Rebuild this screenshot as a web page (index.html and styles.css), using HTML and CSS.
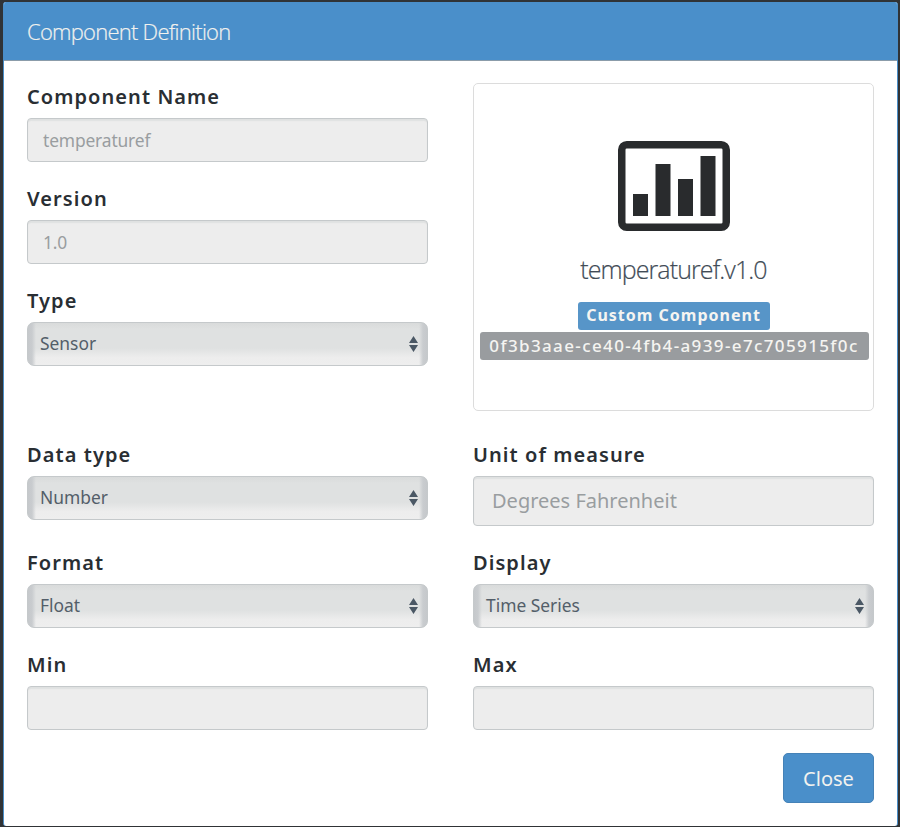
FILE: index.html
```html
<!DOCTYPE html>
<html lang="en">
<head>
<meta charset="utf-8">
<title>Component Definition</title>
<link rel="stylesheet" href="styles.css">
</head>
<body>
<main class="modal">
  <header class="modal-header"><h1 class="title">Component Definition</h1></header>
  <div class="modal-body">
    <section class="grid summary">
      <div>
        <div class="field"><div class="label">Component Name</div><div class="input"><span>temperaturef</span></div></div>
        <div class="field"><div class="label">Version</div><div class="input"><span>1.0</span></div></div>
        <div class="field"><div class="label">Type</div><div class="select"><span>Sensor</span><svg class="arrows" viewBox="0 0 9 16"><path d="M4.500 0L9 7H0zM0 9h9l-4.500 7z"/></svg></div></div>
      </div>
      <div class="card">
        <svg class="chart" viewBox="0 0 112 90"><rect x="3.750" y="3.750" width="104.500" height="82.500" rx="5" fill="none" stroke="#292b2d" stroke-width="7.500"/><path fill="#292b2d" d="M15 53h15v22H15zM37.500 23h15v52h-15zM60 38h15v37H60zM82.500 15h15v60h-15z"/></svg>
        <h2 class="name">temperaturef.v1.0</h2>
        <span class="badge badge-blue">Custom Component</span>
        <span class="badge badge-gray">0f3b3aae-ce40-4fb4-a939-e7c705915f0c</span>
      </div>
    </section>
    <section class="grid">
      <div class="field"><div class="label">Data type</div><div class="select"><span>Number</span><svg class="arrows" viewBox="0 0 9 16"><path d="M4.500 0L9 7H0zM0 9h9l-4.500 7z"/></svg></div></div>
      <div class="field"><div class="label">Unit of measure</div><div class="input input-large"><span>Degrees Fahrenheit</span></div></div>
      <div class="field"><div class="label">Format</div><div class="select"><span>Float</span><svg class="arrows" viewBox="0 0 9 16"><path d="M4.500 0L9 7H0zM0 9h9l-4.500 7z"/></svg></div></div>
      <div class="field"><div class="label">Display</div><div class="select"><span>Time Series</span><svg class="arrows" viewBox="0 0 9 16"><path d="M4.500 0L9 7H0zM0 9h9l-4.500 7z"/></svg></div></div>
      <div class="field"><div class="label">Min</div><div class="input"></div></div>
      <div class="field"><div class="label">Max</div><div class="input"></div></div>
    </section>
    <footer class="footer"><button class="close">Close</button></footer>
  </div>
</main>
</body>
</html>
```
FILE: styles.css
```css
* { box-sizing: border-box; }
body {
  margin: 0;
  height: 827px;
  padding: 2px 2px 1px 3px;
  overflow: hidden;
  background: #303336;
  font-family: "Noto Sans", sans-serif;
}
.modal {
  height: 824px;
  background: #fff;
  border: solid #4a8ec8;
  border-width: 0 1px;
  border-radius: 3px;
  overflow: hidden;
}
.modal-header {
  height: 59px;
  padding-left: 23px;
  background: #4a8fca;
  border-bottom: 1px solid #8b9caa;
  color: #f1f1ee;
}
.title, .name {
  margin: 0;
  font-family: "Open Sans", sans-serif;
  font-weight: 300;
  white-space: nowrap;
}
.title { font-size: 22px; line-height: 58px; letter-spacing: -0.75px; -webkit-text-stroke: 0.2px; }
.modal-body { padding: 22px 23px 0; }
.grid {
  display: grid;
  grid-template-columns: 401px 401px;
  column-gap: 45px;
}
.summary { height: 358px; align-items: start; }
.field { padding-bottom: 23px; }
.label {
  height: 35px;
  line-height: 28px;
  font-size: 20px;
  font-weight: 600;
  letter-spacing: 1.07px;
  color: #292e33;
  white-space: nowrap;
}
.input, .select {
  display: flex;
  align-items: center;
  height: 44px;
  border: 1px solid #c5c9cb;
  font-size: 17.4px;
  white-space: nowrap;
}
.input {
  padding: 0 0 1px 15px;
  border-radius: 4px;
  background: #ededed;
  box-shadow: inset 0 2px 1px #dfe1e1;
  color: #999da0;
  letter-spacing: -0.15px;
}
.input-large { height: 50px; padding-left: 18px; font-size: 20px; letter-spacing: 0; }
.select {
  justify-content: space-between;
  padding: 0 9px 2px 12px;
  border-radius: 7px;
  background: linear-gradient(90deg, #c5c8cb, #c9cccf 4px, transparent 8px, transparent calc(100% - 8px), #c9cccf calc(100% - 4px), #c5c8cb), linear-gradient(#d9dbdb, #dfe1e1 15%, #dfe1e1 60%, #ededed 82%, #eee);
  color: #535e69;
}
.arrows { width: 9px; height: 16px; margin-top: 2px; fill: #4b5865; }
.card {
  display: flex;
  flex-direction: column;
  align-items: center;
  height: 328px;
  padding-top: 57px;
  border: 1px solid #dcdcdc;
  border-radius: 5px;
}
.chart { width: 112px; height: 90px; flex: none; }
.name { height: 71px; padding-top: 18px; line-height: 40px; font-size: 25px; letter-spacing: -0.9px; color: #414b56; -webkit-text-stroke: 0.2px; }
.badge {
  flex: none;
  height: 28px;
  border-radius: 3px;
  line-height: 27px;
  text-align: center;
  white-space: nowrap;
  color: #f5f4f1;
}
.badge-blue { width: 192px; background: #5795c8; font-size: 16px; font-weight: 700; letter-spacing: 1px; }
.badge-gray { width: 389px; margin: 2px -1px 0 0; background: #999c9f; font-size: 17px; font-weight: 500; letter-spacing: 1.38px; }
.footer { display: flex; justify-content: flex-end; }
.close {
  width: 91px;
  height: 50px;
  padding: 0;
  border: 1px solid #4582b7;
  border-radius: 5px;
  background: #4a8fca;
  color: #f2f2ef;
  font: 20px "Noto Sans", sans-serif;
}
```
